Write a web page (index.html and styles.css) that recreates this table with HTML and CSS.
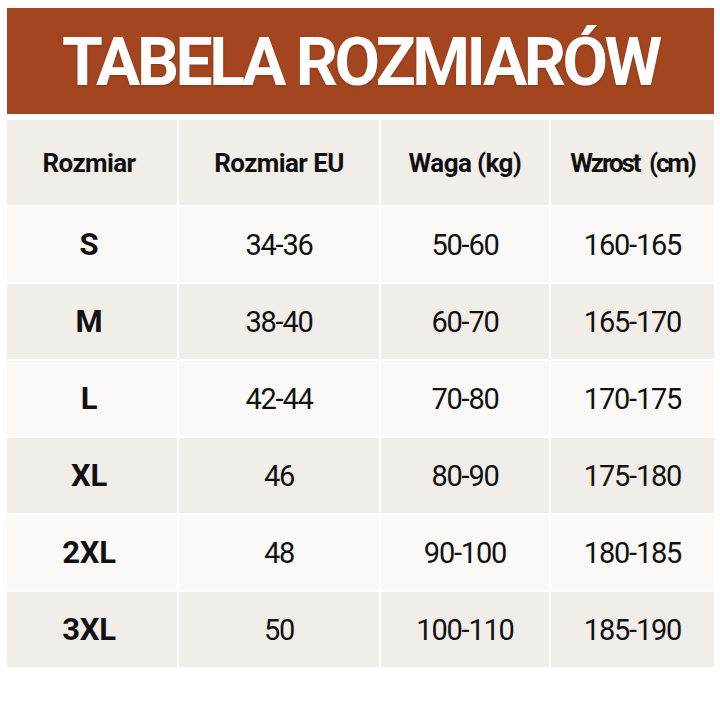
FILE: index.html
```html
<!DOCTYPE html>
<html lang="pl">
<head>
<meta charset="utf-8">
<title>Tabela rozmiarów</title>
<link rel="stylesheet" href="styles.css">
</head>
<body>
<div class="page">
  <div class="banner"><h1 class="title">TABELA ROZMIARÓW</h1></div>
  <div class="table">
    <div class="cell head first">Rozmiar</div>
    <div class="cell head">Rozmiar EU</div>
    <div class="cell head">Waga (kg)</div>
    <div class="cell head tight">Wzrost (cm)</div>

    <div class="cell light size first">S</div>
    <div class="cell light">34-36</div>
    <div class="cell light">50-60</div>
    <div class="cell light">160-165</div>

    <div class="cell dark size first">M</div>
    <div class="cell dark">38-40</div>
    <div class="cell dark">60-70</div>
    <div class="cell dark">165-170</div>

    <div class="cell light size first">L</div>
    <div class="cell light">42-44</div>
    <div class="cell light">70-80</div>
    <div class="cell light">170-175</div>

    <div class="cell dark size first">XL</div>
    <div class="cell dark">46</div>
    <div class="cell dark">80-90</div>
    <div class="cell dark">175-180</div>

    <div class="cell light size first">2XL</div>
    <div class="cell light">48</div>
    <div class="cell light">90-100</div>
    <div class="cell light">180-185</div>

    <div class="cell dark size first">3XL</div>
    <div class="cell dark">50</div>
    <div class="cell dark">100-110</div>
    <div class="cell dark">185-190</div>
  </div>
</div>
</body>
</html>
```
FILE: styles.css
```css
html, body {
  margin: 0;
  padding: 0;
  background: #ffffff;
}
.page {
  padding: 8px 6px 0 7px;
  display: flex;
  flex-direction: column;
  gap: 6px;
  font-family: Roboto, "Noto Sans", sans-serif;
  color: #111111;
}
.banner {
  height: 106px;
  background: #a3451f;
  display: flex;
  align-items: center;
  justify-content: center;
}
.title {
  margin: 0;
  color: #ffffff;
  font-family: Roboto, sans-serif;
  font-weight: 700;
  font-size: 66px;
  letter-spacing: -3.5px;
  line-height: 1;
  padding-top: 4px;
  text-shadow: 0 1px 2px rgba(80, 20, 0, 0.35);
}
.table {
  display: grid;
  grid-template-columns: 170px 200px 168px 163px;
  grid-template-rows: 85px repeat(6, 75px);
  gap: 2px;
}
.cell {
  display: flex;
  align-items: center;
  justify-content: center;
  font-size: 29px;
  letter-spacing: -1.2px;
  font-weight: 400;
}
.first {
  padding-right: 6px;
}
.head {
  background: #f1eee9;
  font-weight: 700;
  font-size: 26px;
  letter-spacing: -0.6px;
}
.head.tight {
  letter-spacing: -2.1px;
  word-spacing: 5px;
}
.light { background: #faf9f7; }
.dark { background: #f1eeea; }
.size {
  font-weight: 700;
  font-size: 31px;
  letter-spacing: -0.3px;
}
```
